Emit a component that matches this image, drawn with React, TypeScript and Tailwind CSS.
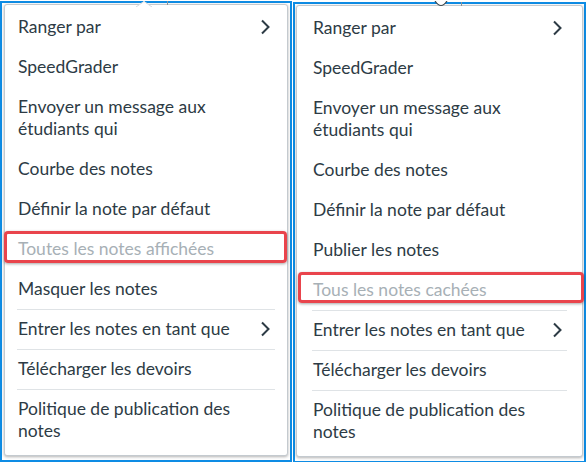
import React from "react";

type Item = {
  label: string[];
  chevron?: boolean;
  disabled?: boolean;
  sep?: boolean;
  box?: string;
};

const leftItems: Item[] = [
  { label: ["Ranger par"], chevron: true },
  { label: ["SpeedGrader"] },
  { label: ["Envoyer un message aux", "étudiants qui"] },
  { label: ["Courbe des notes"] },
  { label: ["Définir la note par défaut"] },
  {
    label: ["Toutes les notes affichées"],
    disabled: true,
    box: "left-[-13px] right-[-12px] top-[2px] h-[32px]",
  },
  { label: ["Masquer les notes"] },
  { label: ["Entrer les notes en tant que"], chevron: true, sep: true },
  { label: ["Télécharger les devoirs"], sep: true },
  { label: ["Politique de publication des", "notes"], sep: true },
];

const rightItems: Item[] = [
  { label: ["Ranger par"], chevron: true },
  { label: ["SpeedGrader"] },
  { label: ["Envoyer un message aux", "étudiants qui"] },
  { label: ["Courbe des notes"] },
  { label: ["Définir la note par défaut"] },
  { label: ["Publier les notes"] },
  {
    label: ["Tous les notes cachées"],
    disabled: true,
    box: "left-[-14px] right-[-17px] top-[2px] h-[31px]",
  },
  { label: ["Entrer les notes en tant que"], chevron: true, sep: true },
  { label: ["Télécharger les devoirs"], sep: true },
  { label: ["Politique de publication des", "notes"], sep: true },
];

const Chevron = () => (
  <svg width="11" height="16" viewBox="0 0 11 16" className="mr-1 shrink-0">
    <polyline
      points="2,1.5 8.5,8 2,14.5"
      fill="none"
      stroke="#2d3b45"
      strokeWidth="2"
    />
  </svg>
);

const MenuItem = ({ item, pad }: { item: Item; pad: string }) => (
  <div className={pad}>
    <div
      className={`relative flex items-center justify-between pl-px pb-[9px] leading-[22px] ${
        item.sep ? "border-t border-[#dfe3e6] pt-[8px]" : "pt-[9px]"
      }`}
    >
      <span className={item.disabled ? "text-[#a7b0b6]" : "text-[#2d3b45]"}>
        {item.label.map((l) => (
          <span key={l} className="block">
            {l}
          </span>
        ))}
      </span>
      {item.chevron && <Chevron />}
      {item.box && (
        <span
          className={`absolute rounded-[4px] border-[3px] border-[#e9444c] shadow-[0_1px_3px_rgba(0,0,0,0.35)] ${item.box}`}
        />
      )}
    </div>
  </div>
);

const Panel = ({
  items,
  pad,
  frame,
  notch,
}: {
  items: Item[];
  pad: string;
  frame: string;
  notch: React.ReactNode;
}) => (
  <div className={`relative border-2 border-[#0e8ce4] bg-white ${frame}`}>
    {notch}
    <div className="rounded-[3px] border border-[#c4cacf] bg-white pt-[2px] pb-[4px] shadow-[0_1px_3px_rgba(0,0,0,0.3)]">
      {items.map((item) => (
        <MenuItem key={item.label.join(" ")} item={item} pad={pad} />
      ))}
    </div>
  </div>
);

export default function App() {
  return (
    <div
      className="flex h-[462px] w-[587px] gap-[1px] bg-white pt-[1px] text-[17.5px]"
      style={{ fontFamily: "Lato, 'Open Sans', sans-serif" }}
    >
      <Panel
        items={leftItems}
        pad="pl-[12px] pr-[12px]"
        frame="w-[292px] h-[461px] pl-[2px] pr-[2px] pt-[1px]"
        notch={
          <>
            <svg
              width="16"
              height="6"
              viewBox="0 0 16 6"
              className="absolute left-[134px] top-[-2px]"
            >
              <path d="M0 6 L8 0 L16 6 Z" fill="white" />
              <path d="M0 6 L8 0.5 L16 6" fill="none" stroke="#d5dade" strokeWidth="1" />
            </svg>
            <span className="absolute left-[165px] top-[-2px] h-[4px] w-px bg-[#8a9399]" />
          </>
        }
      />
      <Panel
        items={rightItems}
        pad="pl-[15px] pr-[15px]"
        frame="w-[293px] h-[461px] pl-[1px] pr-[1px] pt-[1px] mt-[1px]"
        notch={
          <>
            <svg
              width="14"
              height="6"
              viewBox="0 0 14 6"
              className="absolute left-[139px] top-[-3px]"
            >
              <path d="M1 0 Q7 9 13 0" fill="white" stroke="#3d464c" strokeWidth="1.2" />
            </svg>
            <span className="absolute left-[166px] top-[-2px] h-[4px] w-px bg-[#8a9399]" />
          </>
        }
      />
    </div>
  );
}
